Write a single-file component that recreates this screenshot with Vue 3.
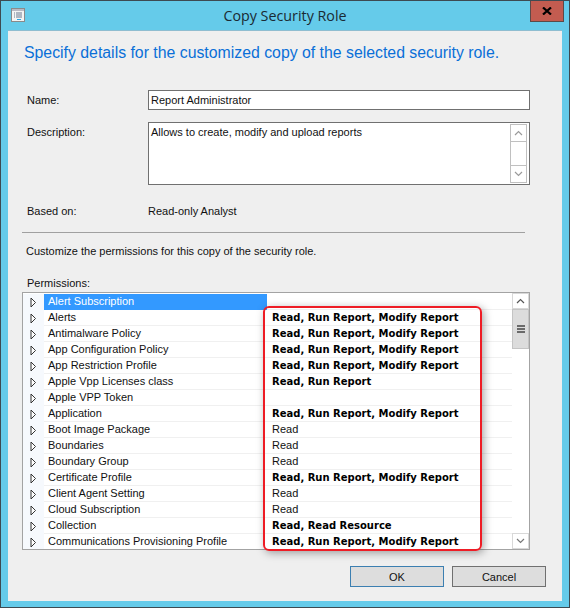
<script setup>
const rows = [
  { name: 'Alert Subscription', perm: '', selected: true },
  { name: 'Alerts', perm: 'Read, Run Report, Modify Report', bold: true },
  { name: 'Antimalware Policy', perm: 'Read, Run Report, Modify Report', bold: true },
  { name: 'App Configuration Policy', perm: 'Read, Run Report, Modify Report', bold: true },
  { name: 'App Restriction Profile', perm: 'Read, Run Report, Modify Report', bold: true },
  { name: 'Apple Vpp Licenses class', perm: 'Read, Run Report', bold: true },
  { name: 'Apple VPP Token', perm: '' },
  { name: 'Application', perm: 'Read, Run Report, Modify Report', bold: true },
  { name: 'Boot Image Package', perm: 'Read' },
  { name: 'Boundaries', perm: 'Read' },
  { name: 'Boundary Group', perm: 'Read' },
  { name: 'Certificate Profile', perm: 'Read, Run Report, Modify Report', bold: true },
  { name: 'Client Agent Setting', perm: 'Read' },
  { name: 'Cloud Subscription', perm: 'Read' },
  { name: 'Collection', perm: 'Read, Read Resource', bold: true },
  { name: 'Communications Provisioning Profile', perm: 'Read, Run Report, Modify Report', bold: true }
]
</script>

<template>
  <div class="window">
    <header class="titlebar">
      <svg class="app-icon" width="15" height="15" viewBox="0 0 15 15">
        <rect x="0.5" y="0.5" width="13" height="13" fill="#f4f4f4" stroke="#8a8a8a" />
        <rect x="1" y="1" width="12" height="2" fill="#b9b9c4" />
        <path d="M3 5h1M5 5h6M3 7h1M5 7h6M3 9h1M5 9h6" stroke="#6d7a90" />
        <rect x="6" y="11" width="4" height="1" fill="#2ca7e0" />
      </svg>
      <span class="title">Copy Security Role</span>
      <button class="close">
        <svg width="10" height="8" viewBox="0 0 10 8">
          <path d="M1 0.5L9 7.5M9 0.5L1 7.5" stroke="#000" stroke-width="2.2" />
        </svg>
      </button>
    </header>

    <main class="client">
      <h1 class="heading">Specify details for the customized copy of the selected security role.</h1>

      <div class="field name-field">
        <label>Name:</label>
        <div class="input">Report Administrator</div>
      </div>

      <div class="field desc-field">
        <label>Description:</label>
        <div class="input textarea">
          <span>Allows to create, modify and upload reports</span>
          <div class="mini-scroll">
            <div class="mini-btn">
              <svg width="9" height="6" viewBox="0 0 9 6"><path d="M1 5l3.5-3.5L8 5" fill="none" stroke="#9a9a9a" stroke-width="1.2" /></svg>
            </div>
            <div class="mini-track"></div>
            <div class="mini-btn">
              <svg width="9" height="6" viewBox="0 0 9 6"><path d="M1 1l3.5 3.5L8 1" fill="none" stroke="#9a9a9a" stroke-width="1.2" /></svg>
            </div>
          </div>
        </div>
      </div>

      <div class="field based-field">
        <label>Based on:</label>
        <span class="value">Read-only Analyst</span>
      </div>

      <hr class="sep" />

      <p class="hint">Customize the permissions for this copy of the security role.</p>
      <p class="perm-label">Permissions:</p>

      <div class="grid">
        <div class="grid-rows">
          <div v-for="r in rows" :key="r.name" class="row">
            <div class="gutter">
              <svg width="7" height="11" viewBox="0 0 7 11"><path d="M1 1l4.5 4.5L1 10z" fill="#fff" stroke="#333" /></svg>
            </div>
            <div class="cell-name" :class="{ selected: r.selected }">{{ r.name }}</div>
            <div class="cell-perm" :class="{ bold: r.bold }">{{ r.perm }}</div>
          </div>
        </div>
        <div class="scroll">
          <div class="scroll-btn">
            <svg width="9" height="6" viewBox="0 0 9 6"><path d="M1 5l3.5-3.5L8 5" fill="none" stroke="#555" stroke-width="1.2" /></svg>
          </div>
          <div class="thumb"><span></span><span></span><span></span></div>
          <div class="scroll-track"></div>
          <div class="scroll-btn">
            <svg width="9" height="6" viewBox="0 0 9 6"><path d="M1 1l3.5 3.5L8 1" fill="none" stroke="#777" stroke-width="1.2" /></svg>
          </div>
        </div>
        <div class="callout"></div>
      </div>

      <div class="buttons">
        <button class="btn default">OK</button>
        <button class="btn">Cancel</button>
      </div>
    </main>
  </div>
</template>

<style>
html, body { margin: 0; background: #65cbea; }
</style>

<style scoped>
.window {
  position: relative;
  width: 570px;
  height: 608px;
  box-sizing: border-box;
  border: 1px solid #3d4a52;
  background: #65cbea;
  display: flex;
  flex-direction: column;
  font-family: "Liberation Sans", sans-serif;
  font-size: 11px;
  color: #111;
  overflow: hidden;
}

.titlebar {
  height: 29px;
  flex: none;
  display: flex;
  align-items: center;
  justify-content: center;
}
.app-icon {
  position: absolute;
  left: 10px;
  top: 7px;
}
.title {
  font-size: 14.3px;
  font-family: "Open Sans", sans-serif;
  color: #1a2a33;
}
.close {
  position: absolute;
  right: 5px;
  top: -1px;
  width: 34px;
  height: 22px;
  padding: 0;
  background: #c35c50;
  border: 1px solid #5c4a48;
  display: flex;
  align-items: center;
  justify-content: center;
}

.client {
  flex: 1;
  margin: 0 7px 6px 7px;
  padding: 0 0 0 14px;
  background: #efefef;
  border-top: 1px solid #8fbdd0;
  position: relative;
  display: flex;
  flex-direction: column;
}

.heading {
  margin: 12px 0 0 2px;
  font: 400 15.84px/20px "Liberation Sans", sans-serif;
  color: #0a6fd8;
}

.field {
  display: flex;
}
.field label {
  width: 121px;
  margin-left: 5px;
  flex: none;
}
.input {
  width: 382px;
  box-sizing: border-box;
  background: #fff;
  border: 1px solid #707070;
  padding: 0 2px;
}
.name-field {
  margin-top: 27px;
  height: 20px;
  align-items: center;
}
.name-field .input {
  height: 20px;
  line-height: 18px;
}
.desc-field {
  margin-top: 12px;
}
.desc-field label {
  line-height: 20px;
}
.textarea {
  height: 63px;
  line-height: 18px;
  display: flex;
  justify-content: space-between;
}
.mini-scroll {
  width: 17px;
  margin: 1px 0 1px 0;
  border: 1px solid #c0c0c0;
  box-sizing: border-box;
  display: flex;
  flex-direction: column;
}
.mini-btn {
  height: 16px;
  flex: none;
  display: flex;
  align-items: center;
  justify-content: center;
}
.mini-track {
  flex: 1;
  border-top: 1px solid #c0c0c0;
  border-bottom: 1px solid #c0c0c0;
}

.based-field {
  margin-top: 18px;
  line-height: 16px;
}

.sep {
  width: 503px;
  height: 1px;
  margin: 13px 0 0 0;
  border: 0;
  background: #a0a0a0;
}

.hint {
  margin: 10px 0 0 4px;
  line-height: 16px;
}
.perm-label {
  margin: 16px 0 0 5px;
  line-height: 16px;
}

.grid {
  position: relative;
  width: 508px;
  height: 258px;
  margin-top: 1px;
  box-sizing: border-box;
  border: 1px solid #a3a3a3;
  background: #fff;
  display: flex;
}
.grid-rows {
  flex: 1;
  overflow: hidden;
  padding-top: 1px;
}
.row {
  height: 16px;
  display: flex;
  box-sizing: border-box;
  line-height: 15px;
}
.gutter {
  width: 21px;
  flex: none;
  background: #f6f9fd;
  display: flex;
  align-items: center;
  justify-content: center;
}
.cell-name {
  width: 223px;
  flex: none;
  box-sizing: border-box;
  padding-left: 4px;
  border-bottom: 1px solid #f0f0f0;
  white-space: nowrap;
}
.cell-name.selected {
  background: #3399ff;
  color: #fff;
  border-bottom-color: #3399ff;
}
.cell-perm {
  flex: 1;
  padding-left: 5px;
  border-bottom: 1px solid #f0f0f0;
  white-space: nowrap;
}
.cell-perm.bold {
  font-family: "DejaVu Sans", sans-serif;
  font-size: 10px;
  font-weight: 700;
  color: #000;
}

.scroll {
  width: 17px;
  flex: none;
  display: flex;
  flex-direction: column;
}
.scroll-btn {
  height: 16px;
  flex: none;
  border: 1px solid #d8d8d8;
  box-sizing: border-box;
  display: flex;
  align-items: center;
  justify-content: center;
}
.thumb {
  height: 40px;
  flex: none;
  box-sizing: border-box;
  background: #dcdcdc;
  border: 1px solid #c4c4c4;
  display: flex;
  flex-direction: column;
  align-items: center;
  justify-content: center;
  gap: 1px;
}
.thumb span {
  width: 8px;
  height: 2px;
  background: #6a6a6a;
}
.scroll-track {
  flex: 1;
  background: #fff;
}

.callout {
  position: absolute;
  left: 240px;
  top: 13px;
  width: 219px;
  height: 245px;
  box-sizing: border-box;
  border: 2px solid #ee1c25;
  border-radius: 6px;
  box-shadow: 2px 2px 8px rgba(0, 0, 0, 0.35);
}

.buttons {
  display: flex;
  justify-content: flex-end;
  gap: 8px;
  margin: 16px 16px 0 0;
}
.btn {
  width: 94px;
  height: 21px;
  padding: 0;
  background: #dddddd;
  border: 1px solid #707070;
  font: inherit;
  color: #111;
}
.btn.default {
  border-color: #3c7fb1;
}
</style>
